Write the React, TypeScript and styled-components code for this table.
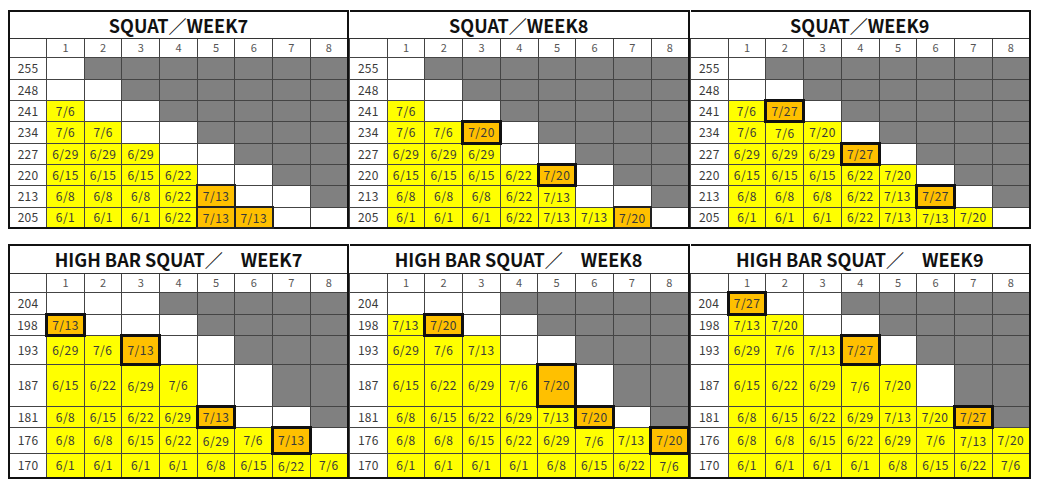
import React from "react";
import styled, { createGlobalStyle } from "styled-components";

const Global = createGlobalStyle`
  html, body { margin: 0; padding: 0; background: #fff; }
  body { font-family: "Noto Sans CJK JP", "Noto Sans", sans-serif; }
`;

type Kind = "W" | "G" | "Y" | "O";
type Edge = "thick" | "medium" | undefined;
interface CellData { k: Kind; t?: string; e?: Edge }

const Page = styled.div`
  display: grid;
  grid-template-columns: repeat(3, 341px);
  row-gap: 15px;
  padding: 10px 0 0 8px;
`;

const Sheet = styled.table<{ $first: boolean }>`
  table-layout: fixed;
  width: 341px;
  border-collapse: collapse;
  border: 2px solid #111;
  ${(p) => (p.$first ? "" : "border-left: none;")}
  font-family: "Noto Sans CJK JP", "Noto Sans", sans-serif;
`;

const Row = styled.tr<{ $h: number }>`
  height: ${(p) => p.$h}px;
`;

const TitleCell = styled.th`
  padding: 0;
  font-size: 18px;
  font-weight: 700;
  color: #111;
  text-align: center;
  background: #fff;
  border-bottom: 1px solid #333;
  line-height: 1;
`;

const HeadCell = styled.th<{ $label?: boolean }>`
  width: ${(p) => (p.$label ? "39px" : "auto")};
  padding: 0;
  font-size: 11px;
  font-weight: 400;
  color: #555;
  text-align: center;
  border: 1px solid #444;
  background: #fff;
  line-height: 1;
`;

const LabelCell = styled.td`
  padding: 0;
  font-size: 12px;
  letter-spacing: 0.3px;
  color: #3a3a3a;
  text-align: center;
  border: 1px solid #444;
  background: #fff;
  line-height: 1;
`;

const colors: Record<Kind, string> = {
  W: "#ffffff",
  G: "#808080",
  Y: "#ffff00",
  O: "#ffc000",
};

const Cell = styled.td<{ $k: Kind; $e: Edge }>`
  padding: 0;
  font-size: 12px;
  letter-spacing: 0.5px;
  color: #3a3a3a;
  text-align: center;
  background: ${(p) => colors[p.$k]};
  border: ${(p) =>
    p.$e === "thick" ? "3px solid #111" : p.$e === "medium" ? "2px solid #222" : "1px solid #444"};
  line-height: 1;
`;

const w: CellData = { k: "W" };
const g: CellData = { k: "G" };
const y = (t: string): CellData => ({ k: "Y", t });
const o = (t: string, e: Edge = "thick"): CellData => ({ k: "O", t, e });

interface TableData {
  title: string;
  labels: string[];
  heights: number[];
  rows: CellData[][];
}

const TOP_LABELS = ["255", "248", "241", "234", "227", "220", "213", "205"];
const TOP_H = [22, 21, 21, 22, 21, 21, 22, 21];
const BOT_LABELS = ["204", "198", "193", "187", "181", "176", "170"];
const BOT_H = [22, 21, 29, 42, 21, 26, 25];

const tables: TableData[] = [
  {
    title: "SQUAT／WEEK7",
    labels: TOP_LABELS,
    heights: TOP_H,
    rows: [
      [w, g, g, g, g, g, g, g],
      [w, w, g, g, g, g, g, g],
      [y("7/6"), w, w, g, g, g, g, g],
      [y("7/6"), y("7/6"), w, w, g, g, g, g],
      [y("6/29"), y("6/29"), y("6/29"), w, w, g, g, g],
      [y("6/15"), y("6/15"), y("6/15"), y("6/22"), w, w, g, g],
      [y("6/8"), y("6/8"), y("6/8"), y("6/22"), o("7/13", "medium"), w, w, g],
      [y("6/1"), y("6/1"), y("6/1"), y("6/22"), o("7/13", "medium"), o("7/13", "medium"), w, w],
    ],
  },
  {
    title: "SQUAT／WEEK8",
    labels: TOP_LABELS,
    heights: TOP_H,
    rows: [
      [w, g, g, g, g, g, g, g],
      [w, w, g, g, g, g, g, g],
      [y("7/6"), w, w, g, g, g, g, g],
      [y("7/6"), y("7/6"), o("7/20"), w, g, g, g, g],
      [y("6/29"), y("6/29"), y("6/29"), w, w, g, g, g],
      [y("6/15"), y("6/15"), y("6/15"), y("6/22"), o("7/20"), w, g, g],
      [y("6/8"), y("6/8"), y("6/8"), y("6/22"), y("7/13"), w, w, g],
      [y("6/1"), y("6/1"), y("6/1"), y("6/22"), y("7/13"), y("7/13"), o("7/20", "medium"), w],
    ],
  },
  {
    title: "SQUAT／WEEK9",
    labels: TOP_LABELS,
    heights: TOP_H,
    rows: [
      [w, g, g, g, g, g, g, g],
      [w, w, g, g, g, g, g, g],
      [y("7/6"), o("7/27"), w, g, g, g, g, g],
      [y("7/6"), y("7/6"), y("7/20"), w, g, g, g, g],
      [y("6/29"), y("6/29"), y("6/29"), o("7/27"), w, g, g, g],
      [y("6/15"), y("6/15"), y("6/15"), y("6/22"), y("7/20"), w, g, g],
      [y("6/8"), y("6/8"), y("6/8"), y("6/22"), y("7/13"), o("7/27"), w, g],
      [y("6/1"), y("6/1"), y("6/1"), y("6/22"), y("7/13"), y("7/13"), y("7/20"), w],
    ],
  },
  {
    title: "HIGH BAR SQUAT／　WEEK7",
    labels: BOT_LABELS,
    heights: BOT_H,
    rows: [
      [w, w, w, g, g, g, g, g],
      [o("7/13"), w, w, w, g, g, g, g],
      [y("6/29"), y("7/6"), o("7/13"), w, w, g, g, g],
      [y("6/15"), y("6/22"), y("6/29"), y("7/6"), w, w, g, g],
      [y("6/8"), y("6/15"), y("6/22"), y("6/29"), o("7/13"), w, w, g],
      [y("6/8"), y("6/8"), y("6/15"), y("6/22"), y("6/29"), y("7/6"), o("7/13"), w],
      [y("6/1"), y("6/1"), y("6/1"), y("6/1"), y("6/8"), y("6/15"), y("6/22"), y("7/6")],
    ],
  },
  {
    title: "HIGH BAR SQUAT／　WEEK8",
    labels: BOT_LABELS,
    heights: BOT_H,
    rows: [
      [w, w, w, g, g, g, g, g],
      [y("7/13"), o("7/20"), w, w, g, g, g, g],
      [y("6/29"), y("7/6"), y("7/13"), w, w, g, g, g],
      [y("6/15"), y("6/22"), y("6/29"), y("7/6"), o("7/20"), w, g, g],
      [y("6/8"), y("6/15"), y("6/22"), y("6/29"), y("7/13"), o("7/20"), w, g],
      [y("6/8"), y("6/8"), y("6/15"), y("6/22"), y("6/29"), y("7/6"), y("7/13"), o("7/20")],
      [y("6/1"), y("6/1"), y("6/1"), y("6/1"), y("6/8"), y("6/15"), y("6/22"), y("7/6")],
    ],
  },
  {
    title: "HIGH BAR SQUAT／　WEEK9",
    labels: BOT_LABELS,
    heights: BOT_H,
    rows: [
      [o("7/27"), w, w, g, g, g, g, g],
      [y("7/13"), y("7/20"), w, w, g, g, g, g],
      [y("6/29"), y("7/6"), y("7/13"), o("7/27"), w, g, g, g],
      [y("6/15"), y("6/22"), y("6/29"), y("7/6"), y("7/20"), w, g, g],
      [y("6/8"), y("6/15"), y("6/22"), y("6/29"), y("7/13"), y("7/20"), o("7/27"), g],
      [y("6/8"), y("6/8"), y("6/15"), y("6/22"), y("6/29"), y("7/6"), y("7/13"), y("7/20")],
      [y("6/1"), y("6/1"), y("6/1"), y("6/1"), y("6/8"), y("6/15"), y("6/22"), y("7/6")],
    ],
  },
];

const COLS = ["1", "2", "3", "4", "5", "6", "7", "8"];

function ProgressTable({ data, first, tall }: { data: TableData; first: boolean; tall: boolean }) {
  return (
    <Sheet $first={first}>
      <thead>
        <Row $h={tall ? 28 : 27}>
          <TitleCell colSpan={9}>{data.title}</TitleCell>
        </Row>
        <Row $h={19}>
          <HeadCell $label />
          {COLS.map((c) => (
            <HeadCell key={c}>{c}</HeadCell>
          ))}
        </Row>
      </thead>
      <tbody>
        {data.rows.map((row, i) => (
          <Row key={data.labels[i]} $h={data.heights[i]}>
            <LabelCell>{data.labels[i]}</LabelCell>
            {row.map((c, j) => (
              <Cell key={j} $k={c.k} $e={c.e}>
                {c.t ?? ""}
              </Cell>
            ))}
          </Row>
        ))}
      </tbody>
    </Sheet>
  );
}

export default function App() {
  return (
    <>
      <Global />
      <Page>
        {tables.map((t, i) => (
          <ProgressTable key={t.title} data={t} first={i % 3 === 0} tall={i >= 3} />
        ))}
      </Page>
    </>
  );
}
